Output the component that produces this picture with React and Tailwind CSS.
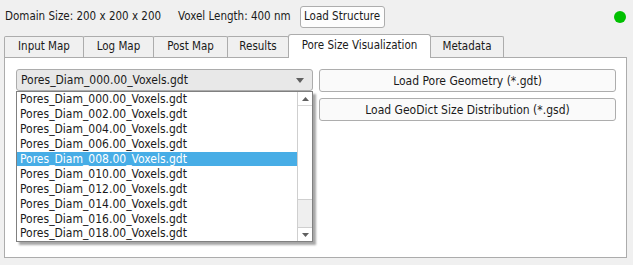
import React from "react";

const FONT = { fontFamily: '"DejaVu Sans Condensed", "Liberation Sans", sans-serif' };

const items = [
  "Pores_Diam_000.00_Voxels.gdt",
  "Pores_Diam_002.00_Voxels.gdt",
  "Pores_Diam_004.00_Voxels.gdt",
  "Pores_Diam_006.00_Voxels.gdt",
  "Pores_Diam_008.00_Voxels.gdt",
  "Pores_Diam_010.00_Voxels.gdt",
  "Pores_Diam_012.00_Voxels.gdt",
  "Pores_Diam_014.00_Voxels.gdt",
  "Pores_Diam_016.00_Voxels.gdt",
  "Pores_Diam_018.00_Voxels.gdt",
];

function Tab({ label, w, active }) {
  if (active) {
    return (
      <div
        className="relative z-10 -ml-px mb-[-1px] flex h-[24px] items-center justify-center rounded-t-[3px] border border-b-0 border-[#acacac] bg-white pb-[2px]"
        style={{ width: w }}
      >
        {label}
      </div>
    );
  }
  return (
    <div
      className="-ml-px flex h-[21px] items-center justify-center rounded-t-[2px] border border-b-0 border-[#acacac] bg-[#f0f0f0] first:ml-0"
      style={{ width: w }}
    >
      {label}
    </div>
  );
}

export default function App() {
  return (
    <div
      className="relative h-[265px] w-[633px] overflow-hidden bg-[#f0f0f0] text-[11.5px] text-[#1a1a1a]"
      style={FONT}
    >
      {/* top bar */}
      <div className="flex h-[32px] items-center pl-[5px] pt-[1px]">
        <span>Domain Size: 200 x 200 x 200</span>
        <span className="ml-[17px]">Voxel Length: 400 nm</span>
        <button className="ml-[9px] flex h-[22px] w-[85px] items-center justify-center rounded-[3px] border border-[#adadad] bg-[#fdfdfd]">
          Load Structure
        </button>
        <div className="ml-auto mr-[7px] h-[12px] w-[12px] rounded-full bg-[#00c000]" />
      </div>

      {/* tabs */}
      <div className="ml-[4px] mt-[2px] flex h-[23px] items-end">
        <Tab label="Input Map" w={80} />
        <Tab label="Log Map" w={71} />
        <Tab label="Post Map" w={75} />
        <Tab label="Results" w={62} />
        <Tab label="Pore Size Visualization" w={143} active />
        <Tab label="Metadata" w={74} />
      </div>

      {/* panel */}
      <div className="ml-[4px] h-[201px] w-[623px] border border-[#acacac] bg-white pl-[11px] pr-[10px] pt-[11px] text-[12px]">
        <div className="flex gap-[6px]">
          {/* combo column */}
          <div className="relative w-[297px]">
            <div className="flex h-[22px] items-center justify-between rounded-[3px] border border-[#acacac] bg-[#e8e8e8] pl-[4px] pr-[8px]">
              <span>Pores_Diam_000.00_Voxels.gdt</span>
              <svg width="8" height="5" viewBox="0 0 8 5">
                <path d="M0 0 L8 0 L4 5 Z" fill="#606060" />
              </svg>
            </div>
            {/* popup list */}
            <div className="absolute left-0 top-[22px] z-20 flex h-[151px] w-[297px] border border-[#808080] bg-white shadow-[3px_3px_2px_rgba(0,0,0,0.35)]">
              <div className="flex-1">
                {items.map((t, i) => (
                  <div
                    key={t}
                    className={
                      "flex h-[14.9px] items-center pl-[3px] " +
                      (i === 4 ? "bg-[#47ade6] text-white" : "")
                    }
                  >
                    {t}
                  </div>
                ))}
              </div>
              <div className="flex w-[15px] flex-col border-l border-[#cfcfcf] bg-white">
                <div className="flex h-[14px] items-center justify-center border-b border-[#d8d8d8]">
                  <svg width="7" height="4" viewBox="0 0 7 4">
                    <path d="M0 4 L7 4 L3.5 0 Z" fill="#606060" />
                  </svg>
                </div>
                <div className="flex-1" />
                <div className="h-[29px] border-y border-[#cfcfcf] bg-[#efefef]" />
                <div className="flex h-[13px] items-center justify-center">
                  <svg width="7" height="4" viewBox="0 0 7 4">
                    <path d="M0 0 L7 0 L3.5 4 Z" fill="#606060" />
                  </svg>
                </div>
              </div>
            </div>
          </div>

          {/* buttons column */}
          <div className="flex w-[297px] flex-col gap-[6px]">
            <button className="flex h-[23px] items-center justify-center rounded-[3px] border border-[#adadad] bg-[#fafafa]">
              Load Pore Geometry (*.gdt)
            </button>
            <button className="flex h-[23px] items-center justify-center rounded-[3px] border border-[#adadad] bg-[#fafafa]">
              Load GeoDict Size Distribution (*.gsd)
            </button>
          </div>
        </div>
      </div>
    </div>
  );
}
